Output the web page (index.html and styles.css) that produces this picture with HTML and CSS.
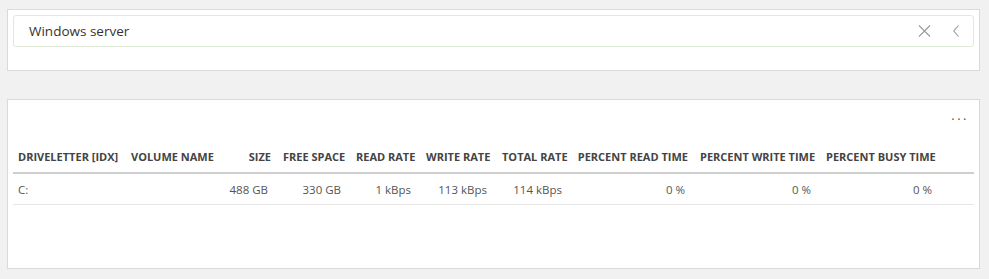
FILE: index.html
```html
<!DOCTYPE html>
<html lang="en">
<head>
  <meta charset="UTF-8">
  <title>Disk volumes</title>
  <link rel="stylesheet" href="styles.css">
</head>
<body>
  <div class="panel search-panel">
    <div class="search-box">
      <span class="search-text">Windows server</span>
      <span class="search-icons">
        <svg class="icon-clear" width="13" height="12" viewBox="0 0 13 12">
          <path d="M1 0.5 L12 11.5 M12 0.5 L1 11.5" stroke="#9a9a9a" stroke-width="1.1" fill="none"/>
        </svg>
        <svg class="icon-back" width="6" height="12" viewBox="0 0 6 12">
          <path d="M5.5 0.5 L0.8 6 L5.5 11.5" stroke="#999" stroke-width="1.1" fill="none"/>
        </svg>
      </span>
    </div>
  </div>

  <div class="panel table-panel">
    <div class="toolbar">
      <span class="more">&middot;&middot;&middot;</span>
    </div>
    <table class="grid">
      <colgroup>
        <col style="width:112px">
        <col style="width:93px">
        <col style="width:59px">
        <col style="width:73px">
        <col style="width:70px">
        <col style="width:76px">
        <col style="width:75px">
        <col style="width:123px">
        <col style="width:126px">
        <col style="width:121px">
        <col>
      </colgroup>
      <thead>
        <tr>
          <th class="first">DRIVELETTER [IDX]</th>
          <th>VOLUME NAME</th>
          <th class="num">SIZE</th>
          <th class="num">FREE SPACE</th>
          <th class="num">READ RATE</th>
          <th class="num">WRITE RATE</th>
          <th class="num">TOTAL RATE</th>
          <th class="num">PERCENT READ TIME</th>
          <th class="num">PERCENT WRITE TIME</th>
          <th class="num">PERCENT BUSY TIME</th>
          <th></th>
        </tr>
      </thead>
      <tbody>
        <tr>
          <td class="first">C:</td>
          <td></td>
          <td class="num">488 GB</td>
          <td class="num">330 GB</td>
          <td class="num">1 kBps</td>
          <td class="num">113 kBps</td>
          <td class="num">114 kBps</td>
          <td class="num">0 %</td>
          <td class="num">0 %</td>
          <td class="num">0 %</td>
          <td></td>
        </tr>
      </tbody>
    </table>
  </div>
</body>
</html>
```

FILE: styles.css
```css
body {
  margin: 9px 9px 0 7px;
  background: #f1f1f1;
  font-family: "Open Sans", "Noto Sans", Arial, sans-serif;
  color: #444;
}
.panel {
  background: #fff;
  border: 1px solid #dadada;
  padding: 5px 5px 0 5px;
}
.search-panel {
  height: 55px;
}
.search-box {
  display: flex;
  align-items: center;
  justify-content: space-between;
  height: 30px;
  border: 1px solid #dfebd6;
  border-radius: 3px;
  padding: 0 14px 0 15px;
}
.search-text {
  font-size: 13.5px;
  color: #333;
}
.search-icons {
  display: flex;
  align-items: center;
  gap: 22px;
}
.icon-clear, .icon-back {
  display: block;
}
.table-panel {
  margin-top: 28px;
  height: 163px;
}
.toolbar {
  height: 35px;
  display: flex;
  justify-content: flex-end;
  align-items: center;
  padding-right: 5px;
}
.more {
  font-size: 13px;
  letter-spacing: 2.5px;
  color: #555;
  line-height: 1;
  margin-top: -6px;
}
.grid {
  width: 100%;
  border-collapse: collapse;
  table-layout: fixed;
}
.grid th, .grid td {
  padding: 0 6px;
  text-align: left;
  white-space: nowrap;
  overflow: visible;
}
.grid th {
  height: 32px;
  font-size: 11px;
  font-weight: 700;
  color: #444;
  border-bottom: 2px solid #cfcfcf;
}
.grid td {
  height: 30px;
  font-size: 11.5px;
  color: #555;
  border-bottom: 1px solid #e6e6e6;
}
.grid .first {
  padding-left: 5px;
}
.grid .num {
  text-align: right;
}
.grid td.num {
  padding-right: 9px;
}
```
